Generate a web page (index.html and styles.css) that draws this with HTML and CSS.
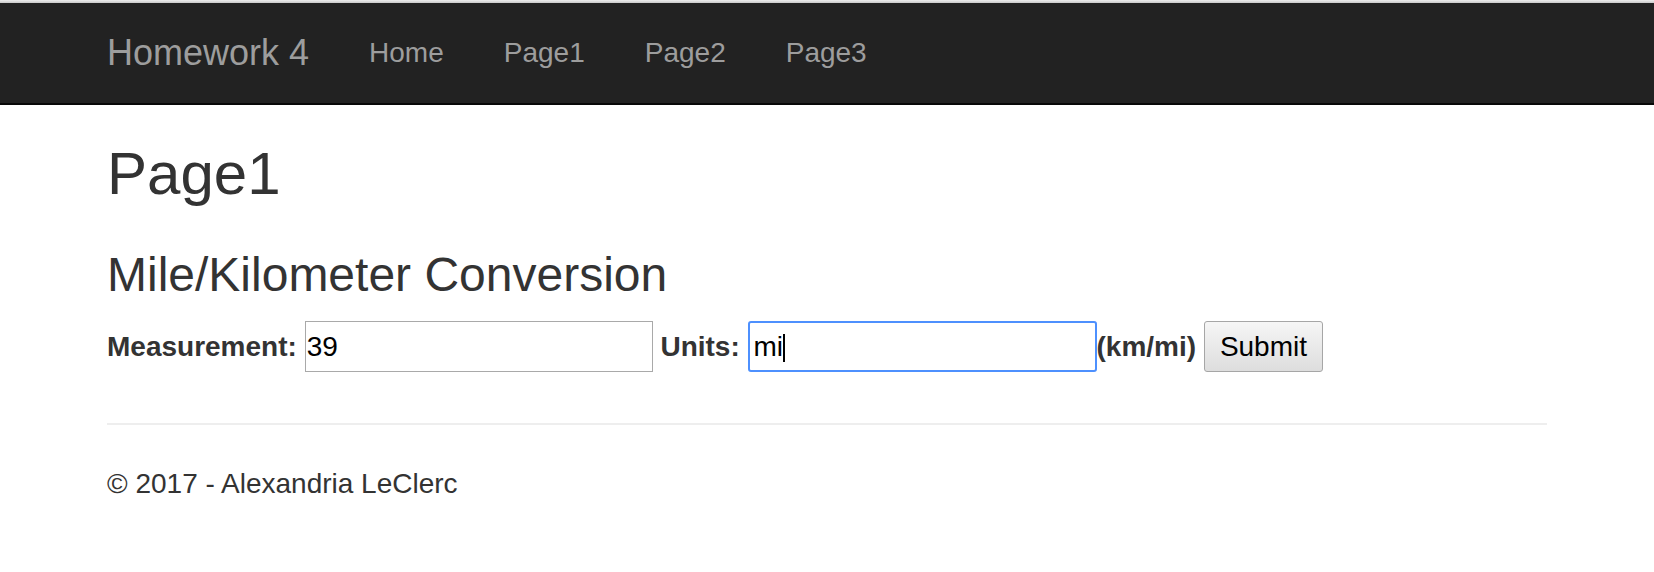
FILE: index.html
```html
<!DOCTYPE html>
<html lang="en">
<head>
<meta charset="utf-8">
<title>Page1 - Homework 4</title>
<link rel="stylesheet" href="styles.css">
</head>
<body>
  <div class="topline"></div>
  <nav class="navbar">
    <div class="container navbar-inner">
      <a class="brand" href="#">Homework 4</a>
      <ul class="nav">
        <li><a href="#">Home</a></li>
        <li><a href="#">Page1</a></li>
        <li><a href="#">Page2</a></li>
        <li><a href="#">Page3</a></li>
      </ul>
    </div>
  </nav>
  <main class="container body-content">
    <h2 class="page-title">Page1</h2>
    <h3 class="section-title">Mile/Kilometer Conversion</h3>
    <form class="convert-form">
      <label class="lbl" for="measurement">Measurement:</label> <input class="field" id="measurement" type="text" value="39"> <label class="lbl" for="units">Units:</label> <span class="field-wrap"><input class="field field-focus" id="units" type="text" value="mi"><span class="caret"></span></span><label class="lbl" for="units">(km/mi)</label> <button class="btn" type="button">Submit</button>
    </form>
    <hr class="rule">
    <footer class="footer">
      <p class="footer-text">&copy; 2017 - Alexandria LeClerc</p>
    </footer>
  </main>
</body>
</html>
```

FILE: styles.css
```css
* {
  box-sizing: border-box;
}

html, body {
  margin: 0;
  padding: 0;
  background: #fff;
}

body {
  font-family: "Liberation Sans", Arial, Helvetica, sans-serif;
  font-size: 28px;
  line-height: 40px;
  color: #333;
}

.container {
  width: 1440px;
  margin: 0 auto;
}

.topline {
  height: 3px;
  background: linear-gradient(#eeeeee, #c9c9c9);
}

.navbar {
  background: #222;
  border-bottom: 2px solid #080808;
}

.navbar-inner {
  display: flex;
  align-items: stretch;
  height: 100px;
}

.brand {
  display: block;
  margin-left: -30px;
  padding: 30px;
  font-size: 36px;
  line-height: 40px;
  color: #9d9d9d;
  text-decoration: none;
}

.nav {
  display: flex;
  margin: 0;
  padding: 0;
  list-style: none;
}

.nav a {
  display: block;
  padding: 30px;
  font-size: 28px;
  line-height: 40px;
  color: #9d9d9d;
  text-decoration: none;
}

.page-title {
  margin: 36px 0 0;
  font-size: 60px;
  line-height: 66px;
  font-weight: 500;
  color: #333;
}

.section-title {
  margin: 41px 0 0;
  font-size: 48px;
  line-height: 53px;
  font-weight: 500;
  color: #333;
}

.convert-form {
  margin: 20px 0 0;
  font-size: 28px;
  line-height: 40px;
}

.lbl {
  font-weight: bold;
  color: #333;
}

.field {
  display: inline-block;
  width: 348px;
  height: 51px;
  margin: 0;
  padding: 0 1px;
  border: 1px solid #a9a9a9;
  border-radius: 0;
  font-family: "Liberation Sans", Arial, sans-serif;
  font-size: 28px;
  color: #000;
  background: #fff;
  outline: none;
}

.field-wrap {
  position: relative;
  display: inline-block;
}

.field-focus {
  width: 349px;
  border: 2px solid #4d90fe;
  border-radius: 3px;
  padding: 0 4px;
}

.caret {
  position: absolute;
  left: 35px;
  top: 13px;
  width: 2px;
  height: 28px;
  background: #000;
}

.btn {
  display: inline-block;
  height: 51px;
  margin: 0;
  padding: 0 15px;
  border: 1px solid #a6a6a6;
  border-radius: 3px;
  background: linear-gradient(#f6f6f6, #dddddd);
  font-family: "Liberation Sans", Arial, sans-serif;
  font-size: 28px;
  color: #000;
}

.rule {
  margin: 51px 0 0;
  border: 0;
  border-top: 2px solid #eee;
  height: 0;
}

.footer {
  margin-top: 39px;
}

.footer-text {
  margin: 0;
  font-size: 28px;
  line-height: 40px;
  color: #333;
}
```
